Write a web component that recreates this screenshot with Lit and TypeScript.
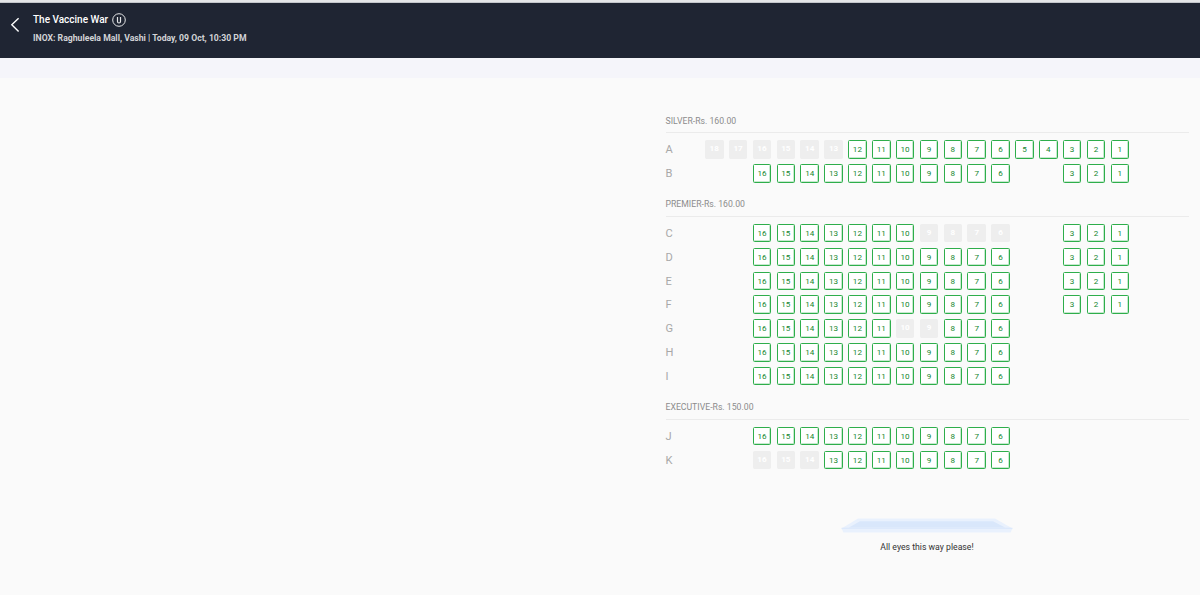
import { LitElement, html, css } from "lit";
import { customElement } from "lit/decorators.js";

interface Row { name: string; seats: number[]; sold?: number[]; }
interface Tier { title: string; rows: Row[]; }

const range = (from: number, to: number) =>
  Array.from({ length: from - to + 1 }, (_, i) => from - i);
const main = range(16, 6);
const side = range(3, 1);

const tiers: Tier[] = [
  { title: "SILVER-Rs. 160.00", rows: [
    { name: "A", seats: range(18, 1), sold: range(18, 13) },
    { name: "B", seats: [...main, ...side] },
  ] },
  { title: "PREMIER-Rs. 160.00", rows: [
    { name: "C", seats: [...main, ...side], sold: range(9, 6) },
    { name: "D", seats: [...main, ...side] },
    { name: "E", seats: [...main, ...side] },
    { name: "F", seats: [...main, ...side] },
    { name: "G", seats: main, sold: [10, 9] },
    { name: "H", seats: main },
    { name: "I", seats: main },
  ] },
  { title: "EXECUTIVE-Rs. 150.00", rows: [
    { name: "J", seats: main },
    { name: "K", seats: main, sold: range(16, 14) },
  ] },
];

@customElement("app-root")
export class AppRoot extends LitElement {
  static styles = css`
    :host { display: block; height: 595px; overflow: hidden; background: #fafafa; font-family: Roboto, sans-serif; }
    .edge { height: 3px; box-sizing: border-box; background: #e4e6e8; border-bottom: 1px solid #c3c6cb; }
    header { height: 55px; box-sizing: border-box; background: #1f2533; display: flex; padding: 9px 0 0 10px; color: #fff; }
    .back { width: 10px; height: 16px; margin: 5px 13px 0 0; }
    .movie { display: flex; align-items: center; height: 15px; font-size: 10px; font-weight: 500; white-space: nowrap; }
    .cert { width: 14px; height: 14px; margin: 1px 0 0 4px; }
    .venue { font-size: 8.67px; font-weight: 700; line-height: 12px; margin-top: 5px; color: #d2d3d6; white-space: nowrap; }
    .strip { height: 20px; background: #f5f5fa; }
    main { width: 523px; margin-left: 665.5px; padding-top: 35px; }
    .tier { padding-bottom: 8.4px; }
    .title { box-sizing: border-box; height: 20.4px; padding-top: 0.5px; line-height: 15px; font-size: 8.7px; color: #8c8c8c; border-bottom: 1px solid #ebebeb; margin-bottom: 7px; }
    .row { display: grid; grid-template-columns: 39.5px repeat(18, 23.87px); height: 23.87px; }
    .name { font-size: 11.1px; line-height: 19px; color: #a8a8a8; }
    .seat { box-sizing: border-box; grid-row: 1; width: 18.5px; height: 18.4px; border: 1px solid #2eae4b; border-radius: 1.5px; background: #fff; box-shadow: inset -0.5px -0.5px 0 #8fd49f; color: #14862e; font-size: 8.1px; line-height: 17px; text-align: center; }
    .sold { background: #eee; border-color: #eee; box-shadow: none; color: #fff; font-weight: 700; line-height: 15px; }
    .screen { display: flex; flex-direction: column; align-items: center; padding-top: 35.5px; font-size: 8.7px; line-height: 12px; color: #333; }
    .screen svg { width: 172px; height: 15px; margin-bottom: 7.5px; }
  `;

  private renderRow(row: Row) {
    return html`<div class="row"><span class="name">${row.name}</span>${row.seats.map(
      (n) => html`<span class="seat ${row.sold?.includes(n) ? "sold" : ""}" style="grid-column:${20 - n}">${n}</span>`,
    )}</div>`;
  }

  render() {
    return html`
      <div class="edge"></div>
      <header>
        <svg class="back" viewBox="0 0 10 16" fill="none" stroke="#fff" stroke-width="1.4"><path d="M8.6 1.2 1.8 7.8l6.8 6.6" /></svg>
        <div>
          <div class="movie">The Vaccine War
            <svg class="cert" viewBox="0 0 14 14" fill="none" stroke="#e4e5e7"><circle cx="7" cy="7" r="6.3" /><path stroke-width="1.2" d="M5.5 4v4.500a1.500 1.500 0 0 0 3 0V4" /></svg>
          </div>
          <div class="venue">INOX: Raghuleela Mall, Vashi | Today, 09 Oct, 10:30 PM</div>
        </div>
      </header>
      <div class="strip"></div>
      <main>
        ${tiers.map((t) => html`<section class="tier"><div class="title">${t.title}</div>${t.rows.map((r) => this.renderRow(r))}</section>`)}
        <div class="screen">
          <svg viewBox="0 0 172 15"><path fill="#e9f1fd" d="M17 .6H154L171.500 10.500 169.500 14.400H2.500L.500 10.500Z" /><path fill="#d9e7fb" d="M19 3.300H152L164 9.500H8Z" /><path fill="none" stroke="#d6e5fc" stroke-width=".8" d="M.500 10.300H171.500" /></svg>
          <span>All eyes this way please!</span>
        </div>
      </main>`;
  }
}
